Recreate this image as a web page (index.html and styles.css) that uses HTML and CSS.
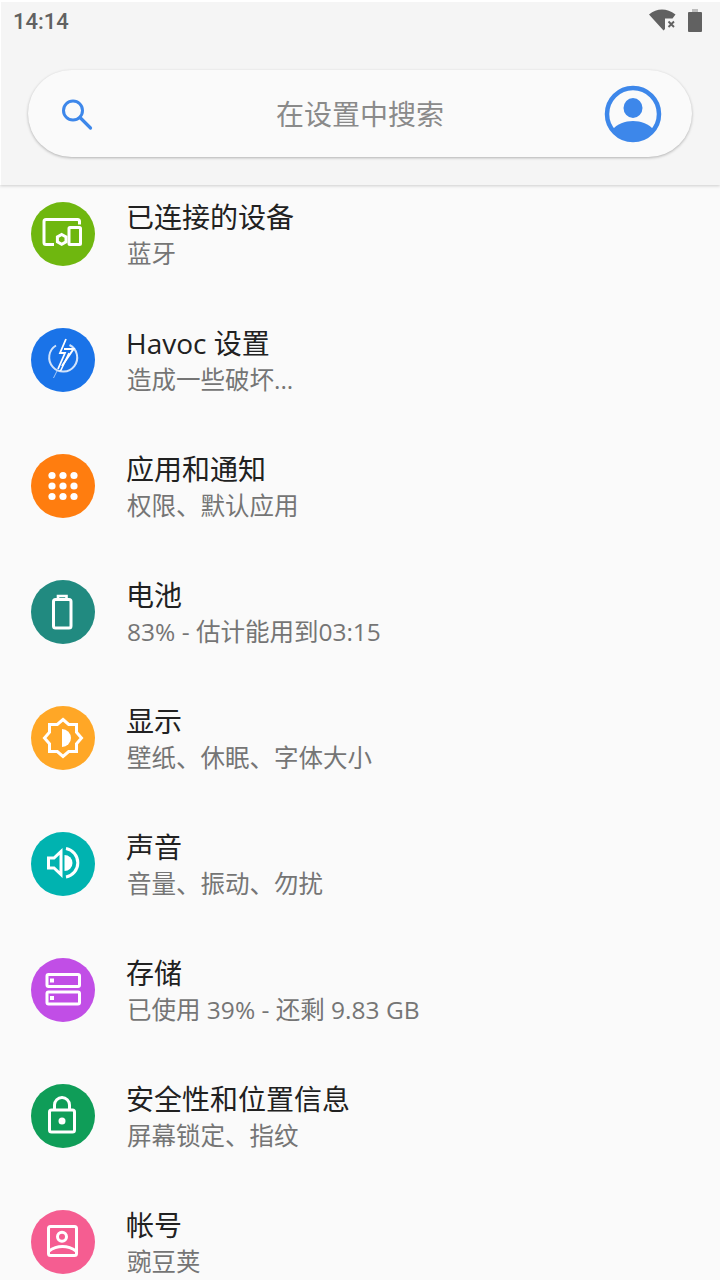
FILE: index.html
```html
<!DOCTYPE html>
<html lang="zh-CN">
<head>
    <meta charset="UTF-8">
    <meta name="viewport" content="width=device-width, initial-scale=1.0">
    <title>设置</title>
    <link rel="stylesheet" href="styles.css">
</head>
<body>
    <header class="top">
        <div class="status">
            <span class="time">14:14</span>
            <div class="status-icons">
                <svg width="30" height="24" viewBox="0 0 30 24">
                    <path d="M2 5.500C6 2 10.500 .500 15 .500S24 2 28.500 5.500L25.500 9.500H18V20l-1.500 1.500z" fill="#616161"/>
                    <path d="M21.500 12.500l5.500 5.500m0-5.500l-5.500 5.500" stroke="#616161" stroke-width="1.900" fill="none"/>
                </svg>
                <svg width="14" height="24" viewBox="0 0 14 24">
                    <path d="M4 0h6v3H4z" fill="#bdbdbd"/>
                    <rect x="0" y="3" width="14" height="20" rx="1" fill="#616161"/>
                </svg>
            </div>
        </div>
        <div class="search">
            <svg class="search-icon" width="34" height="34" viewBox="0 0 34 34">
                <circle cx="14" cy="13.500" r="9.500" fill="none" stroke="#3d87ea" stroke-width="3"/>
                <path d="M21 20.500l10.500 10.500" stroke="#3d87ea" stroke-width="3.200" stroke-linecap="round"/>
            </svg>
            <span class="search-text">在设置中搜索</span>
            <svg class="avatar" width="58" height="58" viewBox="0 0 58 58">
                <circle cx="29" cy="29" r="26" fill="#fafafa" stroke="#3d87ea" stroke-width="4.500"/>
                <ellipse cx="29" cy="23" rx="9.500" ry="10" fill="#3d87ea"/>
                <path d="M8 45c5-6 13-9 21-9s16 3 21 9c-5 7-13 11-21 11S13 52 8 45z" fill="#3d87ea"/>
            </svg>
        </div>
    </header>

    <main class="list">
        <div class="row">
            <div class="badge green">
                <svg viewBox="0 0 64 64" fill="none" stroke="#fff" stroke-width="3">
                    <path d="M23 42.500h-8a2 2 0 0 1-2-2V19.500a2 2 0 0 1 2-2h31.500a2 2 0 0 1 2 2v3"/>
                    <rect x="38" y="25.500" width="11.500" height="17" rx="1"/>
                    <path d="M30.700 32.500l4.300 2.400v5l-4.300 2.400-4.300-2.400v-5z" stroke-width="3"/>
                </svg>
            </div>
            <div class="text">
                <div class="title">已连接的设备</div>
                <div class="sub">蓝牙</div>
            </div>
        </div>
        <div class="row">
            <div class="badge blue">
                <svg viewBox="0 0 64 64" fill="none" stroke="#fff">
                    <path d="M25 17.500A14 14 0 1 0 38.500 17" stroke-width="2" opacity=".8"/>
                    <path d="M35 11l-6 14h5l-7 16" stroke-width="1.800"/>
                    <path d="M33 21h9.500L31 38" stroke-width="2"/>
                    <path d="M38 25L29.500 43" stroke-width="1.600"/>
                    <path d="M26 43l-3.500 7" stroke-width="1" opacity=".6"/>
                </svg>
            </div>
            <div class="text">
                <div class="title">Havoc 设置</div>
                <div class="sub">造成一些破坏...</div>
            </div>
        </div>
        <div class="row">
            <div class="badge orange">
                <svg viewBox="0 0 64 64" fill="#fff">
                    <circle cx="21" cy="21.500" r="3.600"/><circle cx="32" cy="21.500" r="3.600"/><circle cx="43" cy="21.500" r="3.600"/>
                    <circle cx="21" cy="32" r="3.600"/><circle cx="32" cy="32" r="3.600"/><circle cx="43" cy="32" r="3.600"/>
                    <circle cx="21" cy="42.500" r="3.600"/><circle cx="32" cy="42.500" r="3.600"/><circle cx="43" cy="42.500" r="3.600"/>
                </svg>
            </div>
            <div class="text">
                <div class="title">应用和通知</div>
                <div class="sub">权限、默认应用</div>
            </div>
        </div>
        <div class="row">
            <div class="badge teal">
                <svg viewBox="0 0 64 64" fill="none" stroke="#fff" stroke-width="3">
                    <rect x="22.500" y="19.500" width="17.500" height="28.500" rx="2"/>
                    <path d="M27 19v-3h8.500v3" stroke-width="2.600"/>
                </svg>
            </div>
            <div class="text">
                <div class="title">电池</div>
                <div class="sub">83% - 估计能用到03:15</div>
            </div>
        </div>
        <div class="row">
            <div class="badge amber">
                <svg viewBox="0 0 64 64" fill="none" stroke="#fff" stroke-width="3">
                    <path d="M32 13.500l5.700 5h7.800v7.800L50.500 32l-5 5.700v7.800h-7.800l-5.700 5-5.700-5h-7.800v-7.800l-5-5.700 5-5.700v-7.800h7.800z"/>
                    <path d="M31 23a9 9 0 0 1 0 18z" fill="#fff" stroke="none"/>
                </svg>
            </div>
            <div class="text">
                <div class="title">显示</div>
                <div class="sub">壁纸、休眠、字体大小</div>
            </div>
        </div>
        <div class="row">
            <div class="badge cyan">
                <svg viewBox="0 0 64 64" fill="none" stroke="#fff" stroke-width="3">
                    <path d="M17.500 26h5.500l7-6.500v23L23 36h-5.500z"/>
                    <path d="M33.500 23a8 8 0 0 1 0 16z" fill="#fff" stroke="none"/>
                    <path d="M35 16.500a14.500 14.500 0 0 1 0 28.500"/>
                </svg>
            </div>
            <div class="text">
                <div class="title">声音</div>
                <div class="sub">音量、振动、勿扰</div>
            </div>
        </div>
        <div class="row">
            <div class="badge purple">
                <svg viewBox="0 0 64 64" fill="none" stroke="#fff" stroke-width="3">
                    <rect x="16" y="16.500" width="32.500" height="12" rx="1.500"/>
                    <rect x="16" y="34" width="32.500" height="12" rx="1.500"/>
                    <path d="M19 20.500h4v4h-4zM19 38h4v4h-4z" fill="#fff" stroke="none"/>
                </svg>
            </div>
            <div class="text">
                <div class="title">存储</div>
                <div class="sub">已使用 39% - 还剩 9.83 GB</div>
            </div>
        </div>
        <div class="row">
            <div class="badge forest">
                <svg viewBox="0 0 64 64" fill="none" stroke="#fff" stroke-width="3">
                    <rect x="18.500" y="26" width="25" height="22" rx="2"/>
                    <path d="M23.500 26v-5a7.500 7.500 0 0 1 15 0v5"/>
                    <circle cx="31" cy="37" r="3.500" fill="#fff" stroke="none"/>
                </svg>
            </div>
            <div class="text">
                <div class="title">安全性和位置信息</div>
                <div class="sub">屏幕锁定、指纹</div>
            </div>
        </div>
        <div class="row">
            <div class="badge pink">
                <svg viewBox="0 0 64 64" fill="none" stroke="#fff" stroke-width="3">
                    <rect x="17.500" y="16.500" width="28" height="29" rx="2"/>
                    <circle cx="31" cy="26.700" r="4.500"/>
                    <path d="M18 41c4-3 8.500-4.500 13.500-4.500S41 38 45 41"/>
                </svg>
            </div>
            <div class="text">
                <div class="title">帐号</div>
                <div class="sub">豌豆荚</div>
            </div>
        </div>
    </main>
</body>
</html>
```

FILE: styles.css
```css
html, body {
    margin: 0;
    height: 1280px;
    overflow: hidden;
}
body {
    background-color: #fafafa;
    font-family: "Open Sans", "Noto Sans CJK SC", sans-serif;
}
.top {
    position: relative;
    z-index: 1;
    box-sizing: border-box;
    height: 185px;
    padding: 0 28px 0 27px;
    border-top: 2px solid #fff;
    border-left: 1px solid #fff;
    background-color: #f5f5f5;
    box-shadow: 0 1px 3px rgba(0, 0, 0, 0.18);
}
.status {
    display: flex;
    align-items: center;
    justify-content: space-between;
    height: 38px;
    margin: 0 -4px 30px -15px;
}
.time {
    font-family: Roboto, sans-serif;
    font-size: 22px;
    font-weight: 500;
    color: #616161;
}
.status-icons {
    display: flex;
    align-items: center;
    gap: 11px;
    margin-right: -6px;
}
.search {
    display: grid;
    grid-template-columns: 1fr auto 1fr;
    align-items: center;
    box-sizing: border-box;
    height: 87px;
    border-radius: 44px;
    background-color: #fafafa;
    box-shadow: 0 1px 3px rgba(0, 0, 0, 0.28);
}
.search-icon {
    margin-left: 31px;
}
.search-text {
    padding-bottom: 2px;
    font-size: 28px;
    color: #8a8a8a;
}
.avatar {
    justify-self: end;
    margin-right: 30px;
}
.list {
    margin-top: -14px;
}
.row {
    display: flex;
    align-items: center;
    height: 126px;
    padding-left: 31px;
}
.badge {
    width: 64px;
    height: 64px;
    margin-right: 31px;
    border-radius: 50%;
}
.badge svg {
    display: block;
    width: 64px;
    height: 64px;
}
.text {
    padding-top: 2px;
}
.title {
    font-size: 28px;
    line-height: 36px;
    color: #212121;
}
.sub {
    margin: 1px 0 0 1px;
    font-size: 24.500px;
    line-height: 36px;
    color: #757575;
}
.green { background-color: #6fb70f; }
.blue { background-color: #1a73e8; }
.orange { background-color: #ff7d0f; }
.teal { background-color: #218a80; }
.amber { background-color: #ffa726; }
.cyan { background-color: #00b3b0; }
.purple { background-color: #c14ee6; }
.forest { background-color: #0f9d58; }
.pink { background-color: #f55d91; }
```
